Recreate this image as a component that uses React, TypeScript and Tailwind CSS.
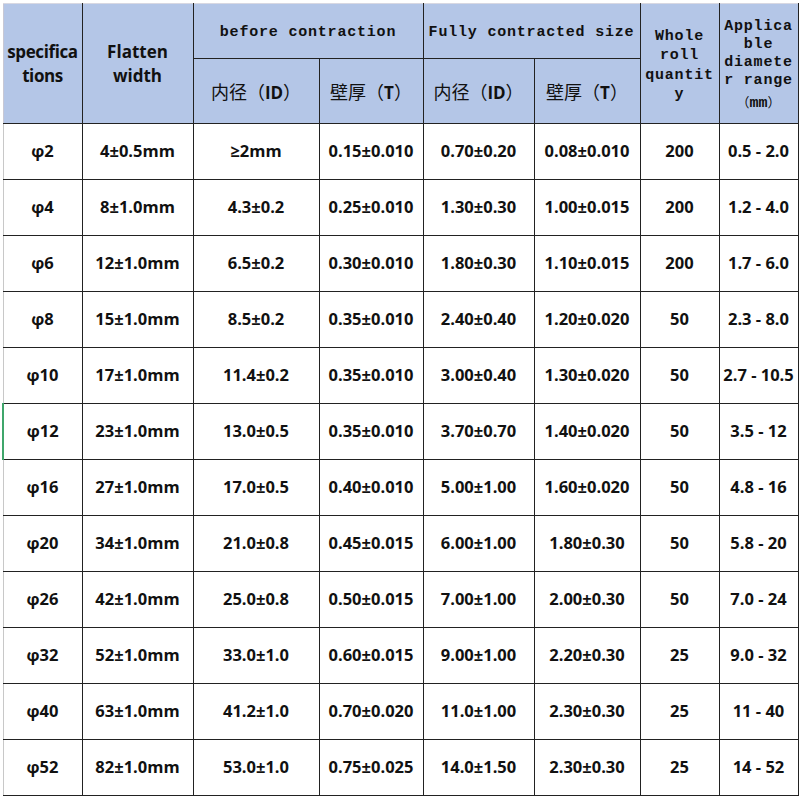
import React from 'react';

type Row = [string, string, string, string, string, string, string, string];

const rows: Row[] = [
  ['φ2', '4±0.5mm', '≥2mm', '0.15±0.010', '0.70±0.20', '0.08±0.010', '200', '0.5 - 2.0'],
  ['φ4', '8±1.0mm', '4.3±0.2', '0.25±0.010', '1.30±0.30', '1.00±0.015', '200', '1.2 - 4.0'],
  ['φ6', '12±1.0mm', '6.5±0.2', '0.30±0.010', '1.80±0.30', '1.10±0.015', '200', '1.7 - 6.0'],
  ['φ8', '15±1.0mm', '8.5±0.2', '0.35±0.010', '2.40±0.40', '1.20±0.020', '50', '2.3 - 8.0'],
  ['φ10', '17±1.0mm', '11.4±0.2', '0.35±0.010', '3.00±0.40', '1.30±0.020', '50', '2.7 - 10.5'],
  ['φ12', '23±1.0mm', '13.0±0.5', '0.35±0.010', '3.70±0.70', '1.40±0.020', '50', '3.5 - 12'],
  ['φ16', '27±1.0mm', '17.0±0.5', '0.40±0.010', '5.00±1.00', '1.60±0.020', '50', '4.8 - 16'],
  ['φ20', '34±1.0mm', '21.0±0.8', '0.45±0.015', '6.00±1.00', '1.80±0.30', '50', '5.8 - 20'],
  ['φ26', '42±1.0mm', '25.0±0.8', '0.50±0.015', '7.00±1.00', '2.00±0.30', '50', '7.0 - 24'],
  ['φ32', '52±1.0mm', '33.0±1.0', '0.60±0.015', '9.00±1.00', '2.20±0.30', '25', '9.0 - 32'],
  ['φ40', '63±1.0mm', '41.2±1.0', '0.70±0.020', '11.0±1.00', '2.30±0.30', '25', '11 - 40'],
  ['φ52', '82±1.0mm', '53.0±1.0', '0.75±0.025', '14.0±1.50', '2.30±0.30', '25', '14 - 52'],
];

const widths = ['w-[79px]', 'w-[111px]', 'w-[126px]', 'w-[104px]', 'w-[111px]', 'w-[106px]', 'w-[79px]', 'w-[79px]'];

const mono = "font-['Liberation_Mono',monospace] font-bold text-[15px] tracking-[0.8px] text-[#111]";
const sans = "font-['Open_Sans',sans-serif] font-bold text-[#111]";

const Cn: React.FC<{ zh: string; en: string }> = ({ zh, en }) => (
  <span className="whitespace-nowrap text-[18px] text-[#111]">
    <span className="font-['Noto_Sans_CJK_SC',sans-serif]">{zh}（</span>
    <span className="font-['Open_Sans',sans-serif] font-bold text-[17px]">{en}</span>
    <span className="font-['Noto_Sans_CJK_SC',sans-serif]">）</span>
  </span>
);

export default function App() {
  return (
    <div className="w-[800px] h-[800px] bg-white overflow-hidden pt-[3px] pl-[2px]">
      <table className="table-fixed border-collapse w-[795px]">
        <colgroup>
          {widths.map((w, i) => (
            <col key={i} className={w} />
          ))}
        </colgroup>
        <thead className="bg-[#b4c6e7]">
          <tr className="h-[55px]">
            <th rowSpan={2} className={`${sans} text-[17px] leading-[24px] tracking-[-0.4px] whitespace-nowrap border border-[#222] border-l-[#c8c8d4] border-t-[#d8d8e2] px-0`}>
              specifica
              <br />
              tions
            </th>
            <th rowSpan={2} className={`${sans} text-[17px] leading-[24px] border border-[#222] border-t-[#d8d8e2]`}>
              Flatten
              <br />
              width
            </th>
            <th colSpan={2} className={`${mono} border border-[#222] border-t-[#d8d8e2] pt-[4px]`}>
              before contraction
            </th>
            <th colSpan={2} className={`${mono} border border-[#222] border-t-[#d8d8e2] pt-[4px] whitespace-nowrap`}>
              Fully contracted size
            </th>
            <th rowSpan={2} className={`${mono} leading-[19.5px] border border-[#222] border-t-[#d8d8e2] pt-[4px]`}>
              Whole
              <br />
              roll
              <br />
              quantit
              <br />y
            </th>
            <th rowSpan={2} className={`${mono} leading-[18px] align-top border border-[#222] border-t-[#d8d8e2] pt-[14px] px-0`}>
              Applica
              <br />
              ble
              <br />
              diamete
              <br />r range
              <div className="mt-[4px] leading-[16px] font-['Noto_Sans_CJK_SC',sans-serif] font-normal tracking-normal text-[13px]">
                （<span className="font-['Liberation_Mono',monospace] font-bold text-[15px]">mm</span>）
              </div>
            </th>
          </tr>
          <tr className="h-[65px]">
            <th className="border border-[#222] font-normal pt-[2px]">
              <Cn zh="内径" en="ID" />
            </th>
            <th className="border border-[#222] font-normal pt-[2px]">
              <Cn zh="壁厚" en="T" />
            </th>
            <th className="border border-[#222] font-normal pt-[2px]">
              <Cn zh="内径" en="ID" />
            </th>
            <th className="border border-[#222] font-normal pt-[2px]">
              <Cn zh="壁厚" en="T" />
            </th>
          </tr>
        </thead>
        <tbody>
          {rows.map((r, ri) => (
            <tr key={ri} className="h-[56px]">
              {r.map((c, ci) => (
                <td
                  key={ci}
                  className={`${sans} text-[16.5px] text-center whitespace-nowrap overflow-hidden p-0 border border-[#222] ${
                    ci === 0 ? (ri === 5 ? 'border-l-2 border-l-[#3fa66b]' : 'border-l-[#c8c8c8]') : ''
                  }`}
                >
                  {c}
                </td>
              ))}
            </tr>
          ))}
        </tbody>
      </table>
    </div>
  );
}
